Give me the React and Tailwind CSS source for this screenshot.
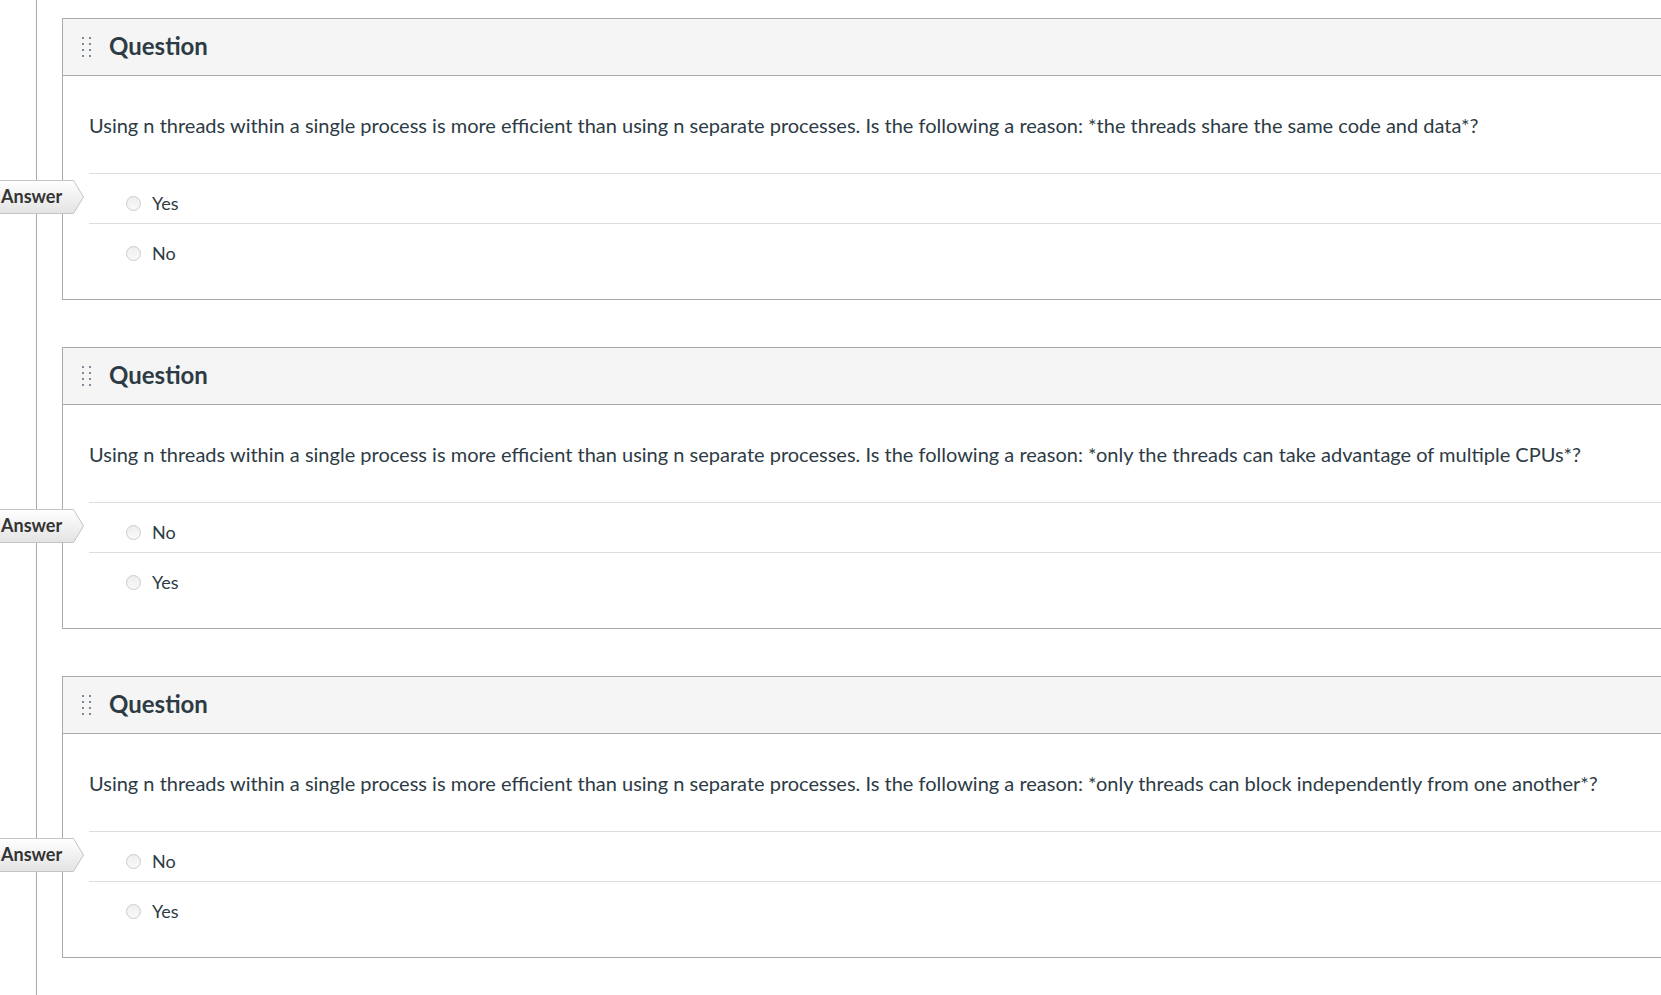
import React from 'react';

const questions = [
    {
        id: 1,
        text: 'Using n threads within a single process is more efficient than using n separate processes. Is the following a reason: *the threads share the same code and data*?',
        answers: ['Yes', 'No'],
    },
    {
        id: 2,
        text: 'Using n threads within a single process is more efficient than using n separate processes. Is the following a reason: *only the threads can take advantage of multiple CPUs*?',
        answers: ['No', 'Yes'],
    },
    {
        id: 3,
        text: 'Using n threads within a single process is more efficient than using n separate processes. Is the following a reason: *only threads can block independently from one another*?',
        answers: ['No', 'Yes'],
    },
];

const DragHandle = () => (
    <div className="grid grid-cols-2 gap-x-[5px] gap-y-[4px]">
        {Array.from({ length: 8 }).map((_, i) => (
            <span key={i} className="block w-[2px] h-[2px] bg-[#7d8a96]" />
        ))}
    </div>
);

const AnswerTag = () => (
    <div className="absolute left-[-75px] top-[161px] w-[96px] h-[34px]">
        <svg className="absolute inset-0" width="96" height="34" viewBox="0 0 96 34">
            <defs>
                <linearGradient id="tagGrad" x1="0" y1="0" x2="0" y2="1">
                    <stop offset="0" stopColor="#ffffff" />
                    <stop offset="1" stopColor="#e3e3e3" />
                </linearGradient>
            </defs>
            <polygon
                points="0.5,0.5 85.5,0.5 95.5,17 85.5,33.5 0.5,33.5"
                fill="url(#tagGrad)"
                stroke="#c4c4c4"
            />
        </svg>
        <span className="relative block pl-[13px] pt-[3px] text-[18px] font-bold text-[#333]">
            Answer
        </span>
    </div>
);

const Radio = () => (
    <span className="block w-[15px] h-[15px] rounded-full border border-[#cccccc] bg-gradient-to-b from-[#eeeeee] to-[#f9f9f9]" />
);

const QuestionCard = ({ q }) => (
    <div className="relative border border-r-0 border-[#aaaaaa] bg-white">
        <div className="h-[57px] flex items-center bg-[#f5f5f5] border-b border-[#aaaaaa] pl-[19px]">
            <DragHandle />
            <h2 className="ml-[18px] -mt-[2px] text-[24px] font-bold text-[#2d3b45]">Question</h2>
        </div>
        <div className="pl-[26px]">
            <div className="h-[97px] flex items-center pt-[1px]">
                <p className="text-[20px] text-[#2d3b45] whitespace-nowrap">{q.text}</p>
            </div>
            {q.answers.map((a) => (
                <div key={a} className="h-[50px] border-t border-[#dddddd] flex items-center pt-[9px] pl-[37px]">
                    <Radio />
                    <span className="ml-[11px] text-[18px] text-[#2d3b45]">{a}</span>
                </div>
            ))}
            <div className="h-[26px]" />
        </div>
        <AnswerTag />
    </div>
);

const App = () => {
    return (
        <div className="min-h-screen bg-white overflow-hidden pl-[36px]" style={{ fontFamily: 'Lato, "Open Sans", sans-serif' }}>
            <div className="min-h-screen border-l border-[#aaaaaa] pl-[25px] pt-[18px] flex flex-col gap-[47px]">
                {questions.map((q) => (
                    <QuestionCard key={q.id} q={q} />
                ))}
            </div>
        </div>
    );
};

export default App;
